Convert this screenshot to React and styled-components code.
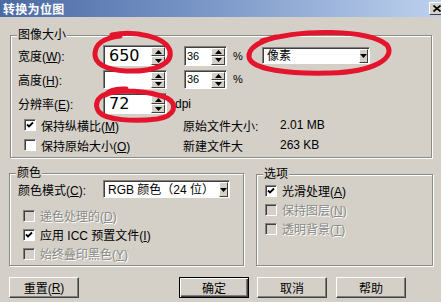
import React from "react"
import styled, { createGlobalStyle } from "styled-components"

const Global = createGlobalStyle`
  html, body { margin: 0; padding: 0; background: #d4d0c8; }
  body { font-family: "Liberation Sans", "Noto Sans CJK SC", sans-serif; font-size: 12px; color: #000; }
`

const Window = styled.div`
  position: relative;
  width: 441px;
  height: 302px;
  overflow: hidden;
  background: #d4d0c8;
  display: flex;
  flex-direction: column;
`

const TitleBar = styled.div`
  height: 17px;
  display: flex;
  align-items: center;
  justify-content: space-between;
  padding-left: 3px;
  background: linear-gradient(to right, #4b6aa4 0%, #7895c6 45%, #bdd1ee 100%);
  color: #fff;
  font-weight: bold;
  font-size: 12px;
  font-family: "Noto Sans CJK SC", sans-serif;
  letter-spacing: 0.3px;
`

const CloseBtn = styled.div`
  width: 15px;
  height: 13px;
  margin-right: -3px;
  box-sizing: border-box;
  background: #d4d0c8;
  border: 1px solid;
  border-color: #fff #404040 #404040 #fff;
  display: flex;
  align-items: center;
  justify-content: center;
`

const Body = styled.div`
  display: flex;
  flex-direction: column;
  padding: 18px 0 0 9px;
`

const Group = styled.div`
  position: relative;
  box-sizing: border-box;
  width: ${p => p.$w}px;
  height: ${p => p.$h}px;
  margin-left: ${p => p.$ml || 0}px;
  margin-top: ${p => p.$mt || 0}px;
  padding: ${p => p.$pad};
  border: 1px solid #8c8a84;
  box-shadow: inset 1px 1px 0 #fff, 1px 1px 0 #fff;
`

const Legend = styled.span`
  position: absolute;
  top: -9px;
  left: ${p => p.$left}px;
  padding: 0 1px;
  background: #d4d0c8;
  line-height: 16px;
`

const Row = styled.div`
  display: flex;
  align-items: center;
  height: ${p => p.$h || 20}px;
  margin-bottom: ${p => p.$mb || 0}px;
  margin-top: ${p => p.$mt || 0}px;
`

const Label = styled.span`
  width: ${p => p.$w}px;
  flex-shrink: 0;
  white-space: nowrap;
`

const Text = styled.span`
  margin-left: ${p => p.$ml || 0}px;
  width: ${p => (p.$w ? p.$w + "px" : "auto")};
  flex-shrink: 0;
  white-space: nowrap;
  font-size: ${p => p.$fs || 12}px;
`

const Field = styled.div`
  box-sizing: border-box;
  width: ${p => p.$w}px;
  height: ${p => p.$h}px;
  margin-left: ${p => p.$ml || 0}px;
  flex-shrink: 0;
  display: flex;
  align-items: stretch;
  background: #fff;
  border: 1px solid;
  border-color: #808080 #fff #fff #808080;
  box-shadow: inset 1px 1px 0 #404040;
  padding: 1px 1px 0 1px;
`

const FieldValue = styled.div`
  flex: 1;
  display: flex;
  align-items: center;
  line-height: 1;
  padding-left: ${p => p.$pl || 2}px;
  font-size: ${p => p.$fs || 12}px;
  font-family: ${p => (p.$big ? '"DejaVu Sans", sans-serif' : '"Liberation Sans", "Noto Sans CJK SC", sans-serif')};
  white-space: nowrap;
`

const SpinCol = styled.div`
  width: 14px;
  display: flex;
  flex-direction: column;
`

const RaisedBtn = styled.div`
  flex: 1;
  box-sizing: border-box;
  background: #d4d0c8;
  border: 1px solid;
  border-color: #fff #404040 #404040 #fff;
  display: flex;
  align-items: center;
  justify-content: center;
  width: ${p => (p.$w ? p.$w + "px" : "auto")};
  flex-grow: ${p => (p.$w ? 0 : 1)};
`

const Tri = ({ down }) => (
  <svg width="7" height="4" viewBox="0 0 7 4">
    <polygon points={down ? "0,0 7,0 3.5,4" : "0,4 7,4 3.5,0"} fill="#000" />
  </svg>
)

const Spinner = ({ w, h, ml, value, big }) => (
  <Field $w={w} $h={h} $ml={ml}>
    <FieldValue $fs={big ? 16 : 11} $big={big} $pl={big ? 4 : 1}>{value}</FieldValue>
    <SpinCol>
      <RaisedBtn><Tri /></RaisedBtn>
      <RaisedBtn><Tri down /></RaisedBtn>
    </SpinCol>
  </Field>
)

const Combo = ({ w, h, ml, value }) => (
  <Field $w={w} $h={h} $ml={ml}>
    <FieldValue $pl={3}>{value}</FieldValue>
    <RaisedBtn $w={15}><Tri down /></RaisedBtn>
  </Field>
)

const Box = styled.div`
  box-sizing: border-box;
  width: 12px;
  height: 12px;
  flex-shrink: 0;
  margin-left: ${p => p.$ml || 0}px;
  background: ${p => (p.$disabled ? "#d4d0c8" : "#fff")};
  border: 1px solid;
  border-color: #808080 #fff #fff #808080;
  box-shadow: inset 1px 1px 0 #404040;
  display: flex;
  align-items: center;
  justify-content: center;
`

const CheckText = styled.span`
  margin-left: 5px;
  white-space: nowrap;
  color: ${p => (p.$disabled ? "#8a8a86" : "#000")};
  text-shadow: ${p => (p.$disabled ? "1px 1px 0 #fff" : "none")};
`

const CheckItem = styled.div`
  display: flex;
  align-items: center;
  width: ${p => (p.$w ? p.$w + "px" : "auto")};
  flex-shrink: 0;
`

const Check = ({ checked, disabled, ml, w, children }) => (
  <CheckItem $w={w}>
    <Box $ml={ml} $disabled={disabled}>
      {checked && (
        <svg width="8" height="8" viewBox="0 0 8 8">
          <polyline points="1,3.5 3,5.5 7,1.5" fill="none" stroke="#000" strokeWidth="1.8" />
        </svg>
      )}
    </Box>
    <CheckText $disabled={disabled}>{children}</CheckText>
  </CheckItem>
)

const Lower = styled.div`
  display: flex;
  align-items: flex-start;
  margin-top: 15px;
`

const Buttons = styled.div`
  display: flex;
  margin-top: 11px;
`

const Button = styled.div`
  box-sizing: border-box;
  width: 70px;
  height: 21px;
  margin-left: ${p => p.$ml || 0}px;
  display: flex;
  align-items: center;
  justify-content: center;
  background: #d4d0c8;
  border: 1px solid;
  border-color: ${p => (p.$default ? "#000" : "#fff #404040 #404040 #fff")};
  box-shadow: ${p =>
    p.$default
      ? "inset 1px 1px 0 #fff, inset -1px -1px 0 #404040, inset -2px -2px 0 #808080"
      : "inset -1px -1px 0 #808080"};
`

const Overlay = styled.svg`
  position: absolute;
  left: 0;
  top: 0;
  pointer-events: none;
`

export default function App() {
  return (
    <>
      <Global />
      <Window>
        <TitleBar>
          <span>转换为位图</span>
          <CloseBtn>
            <svg width="8" height="7" viewBox="0 0 8 7">
              <path d="M0.5 0.5 L7.5 6.5 M7.5 0.5 L0.5 6.5" stroke="#000" strokeWidth="1.6" />
            </svg>
          </CloseBtn>
        </TitleBar>
        <Body>
          <Group $w={422} $h={123} $ml={1} $pad="9px 0 0 7px">
            <Legend $left={6}>图像大小</Legend>
            <Row $h={21} $mb={3}>
              <Label $w={85}>宽度(<u>W</u>):</Label>
              <Spinner w={64} h={21} value="650" big />
              <Spinner w={43} h={20} ml={17} value="36" />
              <Text $ml={6} $w={8} $fs={11}>%</Text>
              <Combo w={108} h={17} ml={21} value="像素" />
            </Row>
            <Row $h={20} $mb={4}>
              <Label $w={85}>高度(<u>H</u>):</Label>
              <Spinner w={64} h={19} value="" />
              <Spinner w={43} h={19} ml={17} value="36" />
              <Text $ml={6} $fs={11}>%</Text>
            </Row>
            <Row $h={21} $mb={1}>
              <Label $w={85}>分辨率(<u>E</u>):</Label>
              <Spinner w={64} h={21} value="72" big />
              <Text $ml={8}>dpi</Text>
            </Row>
            <Row>
              <Check checked ml={6} w={165}>保持纵横比(<u>M</u>)</Check>
              <Text $w={97}>原始文件大小:</Text>
              <Text>2.01 MB</Text>
            </Row>
            <Row>
              <Check ml={6} w={165}>保持原始大小(<u>O</u>)</Check>
              <Text $w={97}>新建文件大</Text>
              <Text>263 KB</Text>
            </Row>
          </Group>

          <Lower>
            <Group $w={235} $h={93} $pad="6px 0 0 8px">
              <Legend $left={6}>颜色</Legend>
              <Row $h={18}>
                <Label $w={85}>颜色模式(<u>C</u>):</Label>
                <Combo w={127} h={18} value="RGB 颜色（24 位）" />
              </Row>
              <Row $h={19} $mt={8}>
                <Check disabled ml={5}>递色处理的(<u>D</u>)</Check>
              </Row>
              <Row $h={19}>
                <Check checked ml={5}>应用 ICC 预置文件(<u>I</u>)</Check>
              </Row>
              <Row $h={19}>
                <Check disabled ml={5}>始终叠印黑色(<u>Y</u>)</Check>
              </Row>
            </Group>
            <Group $w={177} $h={92} $ml={12} $mt={1} $pad="6px 0 0 8px">
              <Legend $left={6}>选项</Legend>
              <Row $h={19}>
                <Check checked>光滑处理(<u>A</u>)</Check>
              </Row>
              <Row $h={19}>
                <Check disabled>保持图层(<u>N</u>)</Check>
              </Row>
              <Row $h={19}>
                <Check disabled>透明背景(<u>T</u>)</Check>
              </Row>
            </Group>
          </Lower>

          <Buttons>
            <Button>重置(<u>R</u>)</Button>
            <Button $ml={100} $default>确定</Button>
            <Button $ml={8}>取消</Button>
            <Button $ml={9}>帮助</Button>
          </Buttons>
        </Body>

        <Overlay width="441" height="302" viewBox="0 0 441 302">
          <g fill="none" stroke="#e4142c" strokeWidth="5" strokeLinecap="round" strokeLinejoin="round">
            <path d="M112 35 C135 30, 166 37, 170 51 C173 65, 152 72, 126 71 C105 70, 94 63, 95 53 C96 43, 104 38, 120 36" />
            <path d="M262 41 C300 29, 368 29, 387 45 C396 58, 374 72, 330 73 C290 74, 251 70, 249 57 C248 48, 258 42, 276 37" />
            <path d="M126 89 Q111 88 105 95 C118 88, 150 91, 167 98 C178 104, 176 116, 157 119 C134 122, 106 120, 99 112 C94 105, 97 97, 106 94" />
          </g>
        </Overlay>
      </Window>
    </>
  )
}
